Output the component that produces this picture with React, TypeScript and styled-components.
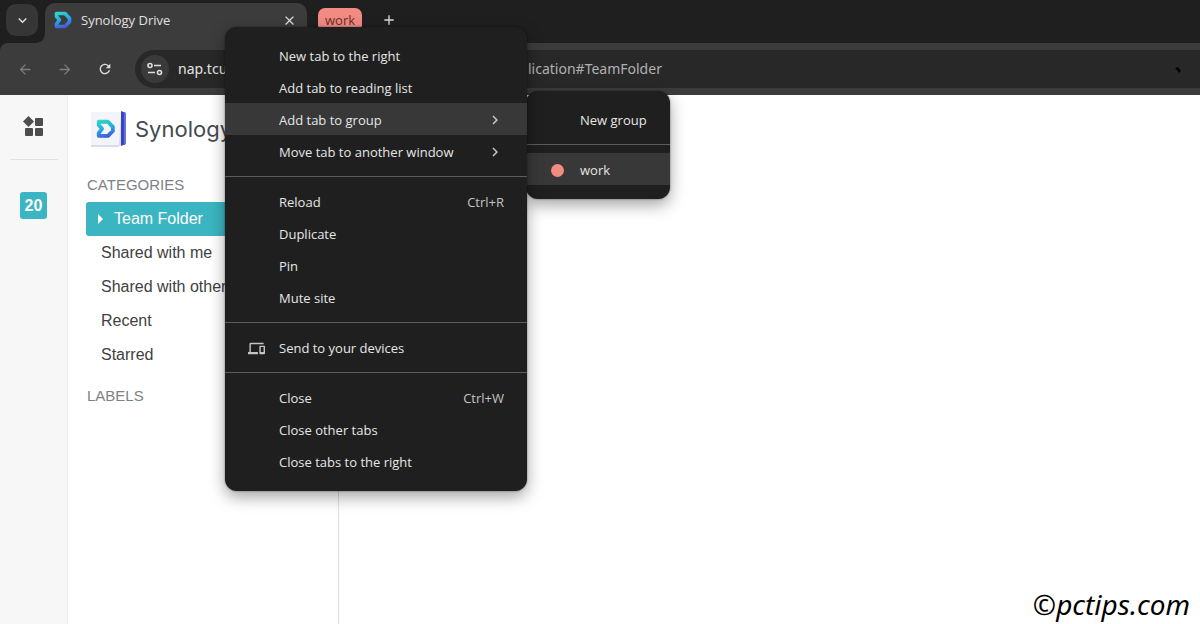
import React from "react";
import styled, { createGlobalStyle } from "styled-components";
import {
  MdAdd,
  MdArrowBack,
  MdArrowForward,
  MdChevronRight,
  MdClose,
  MdDevices,
  MdExpandMore,
  MdRefresh,
} from "react-icons/md";

const ui = `"Open Sans", "Noto Sans", sans-serif`;
const arial = `"Liberation Sans", Arial, sans-serif`;

const GlobalStyle = createGlobalStyle`
  * { box-sizing: border-box; }
  body { margin: 0; font-family: ${ui}; background: #1f1f1f; overflow: hidden; }
  button { border: 0; padding: 0; background: none; font: inherit; color: inherit; text-align: left; }
  ul { list-style: none; margin: 0; padding: 0; }
  svg { display: block; }
`;

const Window = styled.div`
  position: relative;
  min-height: 100vh;
  display: flex;
  flex-direction: column;
`;

const TabStrip = styled.header`
  display: flex;
  align-items: flex-end;
  height: 43px;
  background: #1f1f1f;
`;

const TabSearch = styled.button`
  display: flex;
  align-items: center;
  justify-content: center;
  width: 32px;
  height: 32px;
  margin: 0 7px 7px 6px;
  border-radius: 10px;
  background: #363636;
  color: #e3e3e3;
`;

const Tab = styled.div`
  position: relative;
  display: flex;
  align-items: center;
  gap: 9px;
  width: 262px;
  height: 40px;
  padding: 0 10px 6px 8px;
  border-radius: 10px 10px 0 0;
  background: #3c3c3c;
  color: #e0e0e0;
  font-size: 13px;

  &::before {
    content: "";
    position: absolute;
    left: -8px;
    bottom: 0;
    width: 8px;
    height: 8px;
    background: radial-gradient(circle at 0 0, #1f1f1f 7px, #3c3c3c 8px);
  }
`;

const TabTitle = styled.span`
  flex: 1;
`;

const IconButton = styled.button<{ $dim?: boolean }>`
  display: flex;
  align-items: center;
  justify-content: center;
  width: 16px;
  height: 32px;
  color: ${(p) => (p.$dim ? "#7d7d7d" : "#dcdcdc")};
`;

const GroupChip = styled.button`
  align-self: flex-start;
  height: 24px;
  margin: 8px 19px 0 11px;
  padding: 0 7px;
  border-radius: 7px;
  background: #f28b82;
  color: #6b2f2b;
  font-size: 13px;
  line-height: 22px;
`;

const NewTab = styled(IconButton)`
  align-self: flex-start;
  margin-top: 4px;
`;

const Toolbar = styled.div`
  display: flex;
  align-items: center;
  height: 52px;
  padding: 0 0 0 17px;
  border-radius: 8px 0 0 0;
  background: #3c3c3c;
`;

const NavButtons = styled.nav`
  display: flex;
  gap: 24px;
  margin-right: 22px;
`;

const AddressBar = styled.div`
  display: flex;
  align-items: center;
  flex: 1;
  height: 38px;
  padding: 0 18px 0 6px;
  border-radius: 19px 0 0 19px;
  background: #282828;
  color: #e3e3e3;
  font: 14px/36px "Noto Sans", sans-serif;
`;

const SiteInfo = styled.button`
  display: flex;
  align-items: center;
  justify-content: center;
  width: 28px;
  height: 28px;
  margin-right: 9px;
  border-radius: 50%;
  background: #3a3a3a;
`;

const Host = styled.input`
  width: 350px;
  height: 36px;
  padding: 0;
  border: 0;
  outline: 0;
  background: none;
  color: inherit;
  font: inherit;
`;

const Path = styled.span`
  flex: 1;
  color: #b0b0b0;
`;

const Page = styled.div`
  display: flex;
  flex: 1;
  background: #fff;
`;

const Rail = styled.aside`
  display: flex;
  flex-direction: column;
  align-items: center;
  width: 68px;
  padding-top: 21px;
  border-right: 1px solid #ededed;
  background: #f7f7f7;
`;

const RailDivider = styled.hr`
  width: 48px;
  margin: 22px 0 32px;
  border: 0;
  border-top: 1px solid #e2e2e2;
`;

const DayBadge = styled.button`
  width: 27px;
  height: 27px;
  border-radius: 3px;
  background: #3bb5c2;
  color: #fff;
  font: bold 16px/27px ${arial};
  text-align: center;
`;

const Sidebar = styled.nav`
  width: 271px;
  padding: 14px 0 0 18px;
  border-right: 1px solid #dedede;
  font-family: ${arial};
  font-size: 16px;
`;

const Brand = styled.div`
  display: flex;
  align-items: center;
  gap: 9px;
  height: 40px;
  padding-left: 5px;
  color: #444a50;
  font-family: Inter, sans-serif;
  font-size: 22px;
`;

const SectionTitle = styled.h2`
  margin: 0;
  padding: 26px 0 7px 1px;
  color: #7d8286;
  font-size: 15px;
  font-weight: 400;
  line-height: 20px;
`;

const Category = styled.button<{ $active?: boolean }>`
  display: flex;
  align-items: center;
  gap: 10px;
  width: 100%;
  height: 34px;
  padding-left: ${(p) => (p.$active ? 11 : 15)}px;
  border-radius: 3px;
  background: ${(p) => (p.$active ? "#3bb5c2" : "none")};
  color: ${(p) => (p.$active ? "#fff" : "#414141")};
`;

const LabelsTitle = styled(SectionTitle)`
  padding-top: 14px;
`;

const Menu = styled.div<{ $x: number; $y: number; $w: number }>`
  position: absolute;
  left: ${(p) => p.$x}px;
  top: ${(p) => p.$y}px;
  width: ${(p) => p.$w}px;
  padding: 12px 0 14px;
  border-radius: 12px;
  background: #1f1f1f;
  box-shadow: 0 6px 16px rgba(0, 0, 0, 0.36), 0 0 2px rgba(0, 0, 0, 0.5);
  color: #e6e6e6;
  font-size: 13px;
`;

const MenuItem = styled.button<{ $active?: boolean }>`
  display: grid;
  grid-template-columns: 28px 1fr auto;
  align-items: center;
  width: 100%;
  height: 32px;
  padding: 2px 23px 0 23px;
  background: ${(p) => (p.$active ? "#383838" : "none")};
  white-space: nowrap;
`;

const ItemIcon = styled.span`
  display: flex;
`;

const ItemText = styled.span`
  padding-left: 3px;
`;

const Shortcut = styled.span`
  display: flex;
  color: #c4c4c4;
`;

const Separator = styled.hr`
  margin: 9px 0 8px;
  border: 0;
  border-top: 1px solid #5c5c5c;
`;

const Dot = styled.span`
  width: 13px;
  height: 13px;
  margin-left: 2px;
  border-radius: 50%;
  background: #f28b82;
`;

const Watermark = styled.footer`
  position: absolute;
  right: 10px;
  bottom: 0;
  color: #000;
  font: italic 28px/40px "Noto Sans", sans-serif;
`;

const DriveShape = ({ id }: { id: string }) => (
  <>
    <defs>
      <linearGradient id={id} gradientUnits="userSpaceOnUse" x1="4" y1="1" x2="9" y2="19">
        <stop offset="0" stopColor="#35dcc0" />
        <stop offset="0.5" stopColor="#25aee4" />
        <stop offset="1" stopColor="#4550dc" />
      </linearGradient>
    </defs>
    <path
      d="M3.500 3.500H12L16.500 8.200V12L12 16.500H3.500V14L6.500 10L3.500 6.500z"
      fill="none"
      stroke={`url(#${id})`}
      strokeWidth="3.600"
      strokeLinejoin="round"
    />
  </>
);

const Favicon = () => (
  <svg width="19" height="20" viewBox="0 0 19 20" aria-hidden="true">
    <DriveShape id="favicon" />
  </svg>
);

const BookLogo = () => (
  <svg width="35" height="38" viewBox="0 0 35 38" aria-hidden="true">
    <path d="M0 34h27l3-32v33l-3 2H0z" fill="#d9dce4" />
    <path d="M0 2h30l-2 33H0z" fill="#f2f4f7" />
    <path d="M30 1l5 2v31l-5 2z" fill="#3444c4" />
    <path d="M33 2l2 1v31l-2 1z" fill="#6672dc" />
    <g transform="translate(4 8) scale(1.080)">
      <DriveShape id="book" />
    </g>
  </svg>
);

const TuneIcon = () => (
  <svg width="16" height="14" viewBox="0 0 16 14" fill="none" stroke="#dedede" strokeWidth="1.600" aria-hidden="true">
    <circle cx="3" cy="3.500" r="2" />
    <path d="M7 3.500h7M1 10.500h7" />
    <circle cx="12.500" cy="10.500" r="2" />
  </svg>
);

const AppsIcon = () => (
  <svg width="21" height="21" viewBox="0 0 21 21" fill="#4d4d4d" aria-hidden="true">
    <path d="M5.500 0l5.500 5.500-5.500 5.500L0 5.500z" />
    <rect x="12" y="2" width="8" height="8" rx="1" />
    <rect x="2" y="12" width="8" height="8" rx="1" />
    <rect x="12" y="12" width="8" height="8" rx="1" />
  </svg>
);

type Entry = {
  text: string;
  keys?: string;
  submenu?: boolean;
  active?: boolean;
  icon?: React.ReactNode;
};

const tabMenu: Entry[][] = [
  [
    { text: "New tab to the right" },
    { text: "Add tab to reading list" },
    { text: "Add tab to group", submenu: true, active: true },
    { text: "Move tab to another window", submenu: true },
  ],
  [
    { text: "Reload", keys: "Ctrl+R" },
    { text: "Duplicate" },
    { text: "Pin" },
    { text: "Mute site" },
  ],
  [{ text: "Send to your devices", icon: <MdDevices size={17} color="#c4c4c4" /> }],
  [
    { text: "Close", keys: "Ctrl+W" },
    { text: "Close other tabs" },
    { text: "Close tabs to the right" },
  ],
];

const groupMenu: Entry[][] = [
  [{ text: "New group" }],
  [{ text: "work", active: true, icon: <Dot /> }],
];

const MenuGroups = ({ groups }: { groups: Entry[][] }) => (
  <>
    {groups.map((group, i) => (
      <React.Fragment key={i}>
        {i > 0 && <Separator />}
        {group.map((item) => (
          <MenuItem key={item.text} role="menuitem" $active={item.active}>
            <ItemIcon>{item.icon}</ItemIcon>
            <ItemText>{item.text}</ItemText>
            <Shortcut>
              {item.keys}
              {item.submenu && <MdChevronRight size={18} />}
            </Shortcut>
          </MenuItem>
        ))}
      </React.Fragment>
    ))}
  </>
);

const categories = ["Shared with me", "Shared with others", "Recent", "Starred"];

export default function App() {
  return (
    <Window>
      <GlobalStyle />
      <TabStrip>
        <TabSearch aria-label="Search tabs">
          <MdExpandMore size={17} />
        </TabSearch>
        <Tab>
          <Favicon />
          <TabTitle>Synology Drive</TabTitle>
          <IconButton aria-label="Close tab">
            <MdClose size={15} />
          </IconButton>
        </Tab>
        <GroupChip>work</GroupChip>
        <NewTab aria-label="New tab">
          <MdAdd size={18} />
        </NewTab>
      </TabStrip>

      <Toolbar>
        <NavButtons>
          <IconButton $dim aria-label="Back">
            <MdArrowBack size={19} />
          </IconButton>
          <IconButton $dim aria-label="Forward">
            <MdArrowForward size={19} />
          </IconButton>
          <IconButton aria-label="Reload page">
            <MdRefresh size={20} />
          </IconButton>
        </NavButtons>
        <AddressBar>
          <SiteInfo aria-label="Site information">
            <TuneIcon />
          </SiteInfo>
          <Host aria-label="Address" defaultValue="nap.tcu" />
          <Path>lication#TeamFolder</Path>
          <svg width="8" height="8" viewBox="0 0 8 8" aria-hidden="true">
            <path d="M1 4l2-2 2 1 2 3-2 2-2-3z" fill="#050505" />
          </svg>
        </AddressBar>
      </Toolbar>

      <Page>
        <Rail>
          <button aria-label="Apps">
            <AppsIcon />
          </button>
          <RailDivider />
          <DayBadge>20</DayBadge>
        </Rail>
        <Sidebar>
          <Brand>
            <BookLogo />
            Synology
          </Brand>
          <SectionTitle>CATEGORIES</SectionTitle>
          <ul>
            <li>
              <Category $active>
                <svg width="7" height="10" viewBox="0 0 7 10" aria-hidden="true">
                  <path d="M1 0l5 5-5 5z" fill="#fff" />
                </svg>
                Team Folder
              </Category>
            </li>
            {categories.map((name) => (
              <li key={name}>
                <Category>{name}</Category>
              </li>
            ))}
          </ul>
          <LabelsTitle>LABELS</LabelsTitle>
        </Sidebar>
      </Page>

      <Menu role="menu" $x={526} $y={91} $w={144}>
        <MenuGroups groups={groupMenu} />
      </Menu>
      <Menu role="menu" $x={225} $y={27} $w={302}>
        <MenuGroups groups={tabMenu} />
      </Menu>
      <Watermark>©pctips.com</Watermark>
    </Window>
  );
}
